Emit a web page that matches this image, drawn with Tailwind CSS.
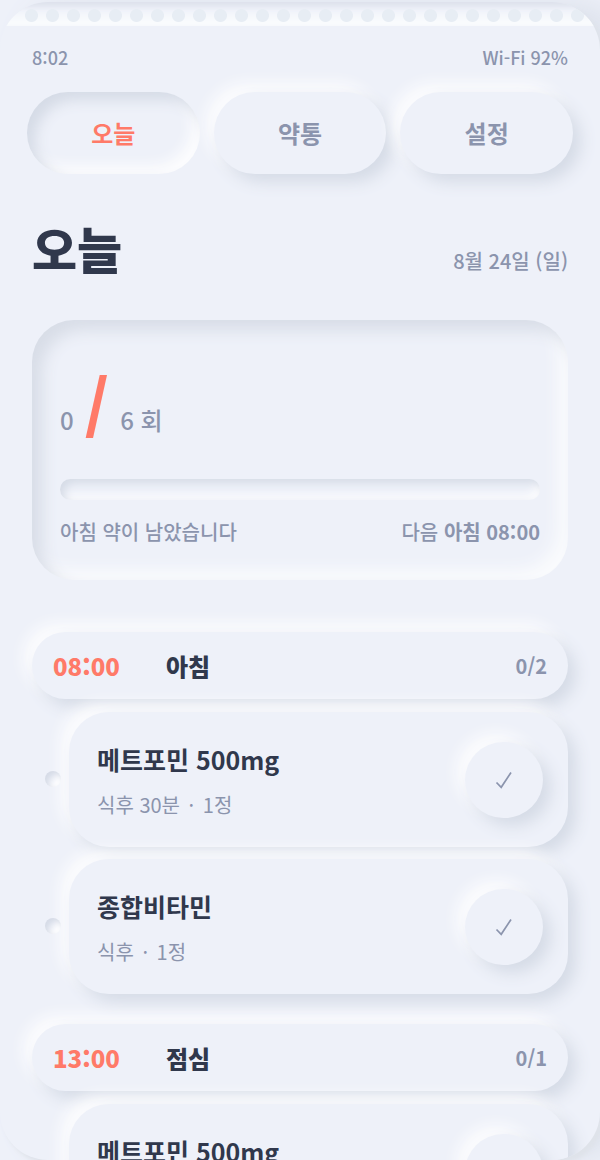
<!DOCTYPE html>
<html lang="ko">
<head>
    <meta charset="UTF-8">
    <meta name="viewport" content="width=device-width, initial-scale=1.0">
    <title>오늘</title>
    <script src="https://cdn.jsdelivr.net/npm/@tailwindcss/browser@4"></script>
</head>
<body class="h-screen overflow-hidden bg-[#eef1f9] pt-[2px] font-['Noto_Sans_CJK_KR',sans-serif] text-[#8b94ad]">
    <div class="h-full overflow-hidden rounded-[48px] bg-[#eef1f9] shadow-[4px_4px_4px_#dfe3ea,24px_0_30px_#dde2ec]">
        <!-- Perforated edge -->
        <div class="h-6 pr-3 pl-[21px] shadow-[inset_0_4px_6px_#dce0eb,inset_0_-12px_10px_#f9fbfd]">
            <div class="h-6 bg-[radial-gradient(circle_at_center,#e7edf4_6px,transparent_7px)] bg-[size:21px_27px]"></div>
        </div>

        <header class="flex justify-between px-8 pt-4 text-[18px] leading-[30px] font-medium">
            <span>8:02</span>
            <span>Wi-Fi 92%</span>
        </header>

        <nav class="mx-[27px] mt-5 grid grid-cols-3 gap-[14px] text-[24px] leading-[82px] font-bold">
            <button class="rounded-full text-[#ff7a68] shadow-[inset_8px_8px_14px_#d5dbe6,inset_-8px_-8px_14px_#fdfdfe]">오늘</button>
            <button class="rounded-full bg-[#eef1f9] shadow-[8px_8px_16px_#d5dbe6,-8px_-8px_16px_#fdfdfe]">약통</button>
            <button class="rounded-full bg-[#eef1f9] shadow-[8px_8px_16px_#d5dbe6,-8px_-8px_16px_#fdfdfe]">설정</button>
        </nav>

        <main class="px-8 pt-[38px]">
            <div class="flex items-baseline justify-between">
                <h1 class="text-[49px] leading-[72px] font-black text-[#30384c]">오늘</h1>
                <span class="text-[20px] font-medium">8월 24일 (일)</span>
            </div>

            <section class="mt-9 rounded-[42px] px-7 pt-[35px] pb-8 shadow-[inset_10px_10px_16px_#d8dde7,inset_-10px_-10px_16px_#fafbfd]">
                <div class="flex items-baseline gap-[11px] text-[24px] leading-[96px] font-medium">
                    <span>0</span>
                    <span class="text-[63px] font-black text-[#ff7a68]">/</span>
                    <span>6 회</span>
                </div>
                <div class="mt-[11px] h-[21px] rounded-full shadow-[inset_4px_4px_8px_#d5dbe6,inset_-4px_-4px_8px_#fdfdfe]"></div>
                <div class="mt-4 flex justify-between text-[20px] leading-[32px] font-medium">
                    <span>아침 약이 남았습니다</span>
                    <span>다음 <b class="font-bold">아침 08:00</b></span>
                </div>
            </section>

            <section class="mt-[52px]">
                <div class="flex items-center rounded-full bg-[#eef1f9] px-[21px] leading-[67px] font-bold shadow-[8px_8px_16px_#d5dbe6,-8px_-8px_16px_#fdfdfe]">
                    <time class="w-[113px] text-[24px] font-black text-[#ff7a68]">08:00</time>
                    <h2 class="flex-1 text-[24px] font-black text-[#30384c]">아침</h2>
                    <span class="text-[20px]">0/2</span>
                </div>
                <ul class="mt-[13px] space-y-3 pl-[37px]">
                    <li class="relative flex items-center justify-between rounded-[40px] bg-[#eef1f9] py-7 pr-[25px] pl-7 shadow-[8px_8px_16px_#d5dbe6,-8px_-8px_16px_#fdfdfe]">
                        <i class="absolute top-[59px] -left-6 size-4 rounded-full shadow-[inset_3px_3px_6px_#d3d9e5,inset_-3px_-3px_6px_#ffffff]"></i>
                        <div>
                            <h3 class="text-[25px] leading-[38px] font-bold text-[#30384c]">메트포민 500mg</h3>
                            <p class="mt-3 text-[20px] leading-[29px]">식후 30분 <span class="mx-[3px]">·</span> 1정</p>
                        </div>
                        <button aria-label="복용 완료" class="grid h-[76px] w-[78px] place-items-center rounded-full shadow-[8px_8px_16px_#d5dbe6,-8px_-8px_16px_#fdfdfe]">
                            <svg class="size-5" viewBox="0 0 20 20" fill="none" stroke="currentColor" stroke-width="1.7"><path d="M2.500 12.500l4.700 4.800L17 2.500"/></svg>
                        </button>
                    </li>
                    <li class="relative flex items-center justify-between rounded-[40px] bg-[#eef1f9] py-7 pr-[25px] pl-7 shadow-[8px_8px_16px_#d5dbe6,-8px_-8px_16px_#fdfdfe]">
                        <i class="absolute top-[59px] -left-6 size-4 rounded-full shadow-[inset_3px_3px_6px_#d3d9e5,inset_-3px_-3px_6px_#ffffff]"></i>
                        <div>
                            <h3 class="text-[25px] leading-[38px] font-bold text-[#30384c]">종합비타민</h3>
                            <p class="mt-3 text-[20px] leading-[29px]">식후 <span class="mx-[3px]">·</span> 1정</p>
                        </div>
                        <button aria-label="복용 완료" class="grid h-[76px] w-[78px] place-items-center rounded-full shadow-[8px_8px_16px_#d5dbe6,-8px_-8px_16px_#fdfdfe]">
                            <svg class="size-5" viewBox="0 0 20 20" fill="none" stroke="currentColor" stroke-width="1.7"><path d="M2.500 12.500l4.700 4.800L17 2.500"/></svg>
                        </button>
                    </li>
                </ul>
            </section>

            <section class="mt-[30px]">
                <div class="flex items-center rounded-full bg-[#eef1f9] px-[21px] leading-[67px] font-bold shadow-[8px_8px_16px_#d5dbe6,-8px_-8px_16px_#fdfdfe]">
                    <time class="w-[113px] text-[24px] font-black text-[#ff7a68]">13:00</time>
                    <h2 class="flex-1 text-[24px] font-black text-[#30384c]">점심</h2>
                    <span class="text-[20px]">0/1</span>
                </div>
                <ul class="mt-[13px] space-y-3 pl-[37px]">
                    <li class="relative flex items-center justify-between rounded-[40px] bg-[#eef1f9] py-7 pr-[25px] pl-7 shadow-[8px_8px_16px_#d5dbe6,-8px_-8px_16px_#fdfdfe]">
                        <i class="absolute top-[59px] -left-6 size-4 rounded-full shadow-[inset_3px_3px_6px_#d3d9e5,inset_-3px_-3px_6px_#ffffff]"></i>
                        <div>
                            <h3 class="text-[25px] leading-[38px] font-bold text-[#30384c]">메트포민 500mg</h3>
                            <p class="mt-3 text-[20px] leading-[29px]">식후 30분 <span class="mx-[3px]">·</span> 1정</p>
                        </div>
                        <button aria-label="복용 완료" class="grid h-[76px] w-[78px] place-items-center rounded-full shadow-[8px_8px_16px_#d5dbe6,-8px_-8px_16px_#fdfdfe]">
                            <svg class="size-5" viewBox="0 0 20 20" fill="none" stroke="currentColor" stroke-width="1.7"><path d="M2.500 12.500l4.700 4.800L17 2.500"/></svg>
                        </button>
                    </li>
                </ul>
            </section>
        </main>
    </div>
</body>
</html>
